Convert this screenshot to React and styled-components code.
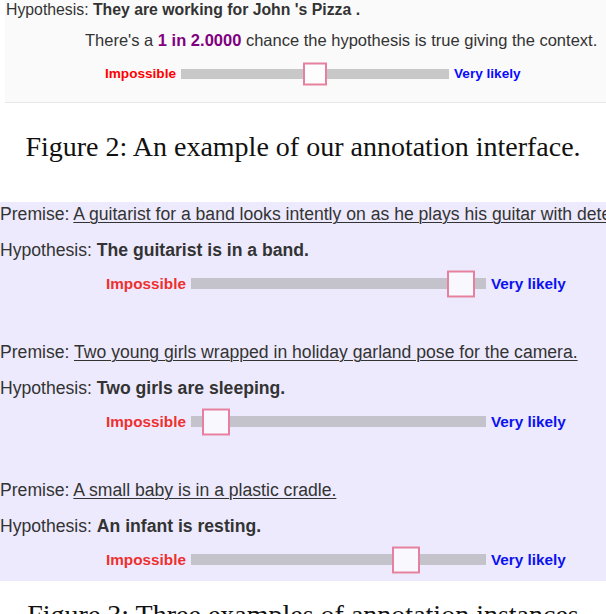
import React from "react";
import styled, { createGlobalStyle, css } from "styled-components";

const Global = createGlobalStyle`
  html, body {
    margin: 0;
    padding: 0;
    background: #ffffff;
  }
  body {
    font-family: "Liberation Sans", Arial, Helvetica, sans-serif;
    color: #333333;
  }
`;

const Page = styled.div`
  width: 606px;
  height: 614px;
  overflow: hidden;
`;

/* ---------- single-item interface with the odds readout ---------- */

const ScorePanel = styled.section`
  margin-left: 5px;
  height: 103px;
  box-sizing: border-box;
  padding: 0.5px 0 0 1px;
  background: #fafafa;
  border-bottom: 1px solid #e8e8e8;
`;

const HeadLine = styled.div`
  font-size: 15.8px;
  line-height: 18px;
  white-space: nowrap;
`;

const ChanceLine = styled.div`
  margin-top: 12.5px;
  padding-left: 79px;
  font-size: 16.5px;
  line-height: 19px;
  white-space: nowrap;
`;

const Odds = styled.b`
  color: #800080;
`;

/* ---------- likelihood scale ---------- */

const scaleSizes = {
  compact: css`
    --label: 13.6px;
    --track-w: 268px;
    --track-h: 10px;
    --thumb-w: 24px;
    --thumb-h: 23px;
    --red: #ff0000;
    --blue: #0a0aff;
    --track: #c8c8c8;
    --thumb-fill: #fdfdfd;
  `,
  roomy: css`
    --label: 15.3px;
    --track-w: 295px;
    --track-h: 11px;
    --thumb-w: 28px;
    --thumb-h: 27px;
    --red: #ee3030;
    --blue: #0c12f0;
    --track: #c4c3cb;
    --thumb-fill: #f9f8fe;
  `,
};

const ScaleRow = styled.div`
  ${(p) => scaleSizes[p.$size]}
  display: flex;
  align-items: center;
  gap: 5px;
  height: var(--thumb-h);
  margin-top: ${(p) => p.$top}px;
  padding-left: ${(p) => p.$indent}px;
`;

const ScaleLabel = styled.span`
  font-size: var(--label);
  font-weight: 700;
  line-height: 1;
  white-space: nowrap;
  color: ${(p) => (p.$tone === "low" ? "var(--red)" : "var(--blue)")};
`;

const Track = styled.div`
  position: relative;
  flex: none;
  width: var(--track-w);
  height: var(--track-h);
  background: var(--track);
`;

const Thumb = styled.div`
  position: absolute;
  top: 50%;
  width: var(--thumb-w);
  height: var(--thumb-h);
  box-sizing: border-box;
  transform: translateY(-50%);
  background: var(--thumb-fill);
  border: 2.5px solid #e6809f;
`;

function Scale({ size, value, top, indent }) {
  return (
    <ScaleRow $size={size} $top={top} $indent={indent}>
      <ScaleLabel $tone="low">Impossible</ScaleLabel>
      <Track>
        <Thumb
          style={{
            left: `calc((var(--track-w) - var(--thumb-w)) * ${value})`,
          }}
        />
      </Track>
      <ScaleLabel $tone="high">Very likely</ScaleLabel>
    </ScaleRow>
  );
}

/* ---------- figure captions ---------- */

const Caption = styled.p`
  margin: ${(p) => p.$top}px 0 0;
  font-family: "Liberation Serif", "Times New Roman", serif;
  font-size: 28px;
  line-height: 32px;
  color: #111111;
  text-align: center;
  white-space: nowrap;
`;

/* ---------- batch of premise / hypothesis pairs ---------- */

const BatchPanel = styled.section`
  margin-top: 39px;
  padding: 2px 0 8px;
  background: #edeafd;
  overflow: hidden;
`;

const Item = styled.div`
  & + & {
    margin-top: 45px;
  }
`;

const TextLine = styled.div`
  font-size: 17.6px;
  line-height: 20px;
  white-space: nowrap;
  margin-top: ${(p) => p.$top || 0}px;
`;

const PremiseText = styled.span`
  text-decoration: underline;
  text-underline-offset: 2px;
  text-decoration-thickness: 1px;
`;

const items = [
  {
    premise:
      "A guitarist for a band looks intently on as he plays his guitar with determination.",
    hypothesis: "The guitarist is in a band.",
    value: 0.96,
  },
  {
    premise: "Two young girls wrapped in holiday garland pose for the camera.",
    hypothesis: "Two girls are sleeping.",
    value: 0.04,
  },
  {
    premise: "A small baby is in a plastic cradle.",
    hypothesis: "An infant is resting.",
    value: 0.755,
  },
];

export default function App() {
  return (
    <Page>
      <Global />
      <ScorePanel>
        <HeadLine>
          Hypothesis: <b>They are working for John 's Pizza .</b>
        </HeadLine>
        <ChanceLine>
          There's a <Odds>1 in 2.0000</Odds> chance the hypothesis is true
          giving the context.
        </ChanceLine>
        <Scale size="compact" value={0.5} top={12} indent={99} />
      </ScorePanel>

      <Caption $top={28}>Figure 2: An example of our annotation interface.</Caption>

      <BatchPanel>
        {items.map((it) => (
          <Item key={it.hypothesis}>
            <TextLine>
              Premise: <PremiseText>{it.premise}</PremiseText>
            </TextLine>
            <TextLine $top={16}>
              Hypothesis: <b>{it.hypothesis}</b>
            </TextLine>
            <Scale size="roomy" value={it.value} top={10} indent={106} />
          </Item>
        ))}
      </BatchPanel>

      <Caption $top={18}>Figure 3: Three examples of annotation instances</Caption>
    </Page>
  );
}
